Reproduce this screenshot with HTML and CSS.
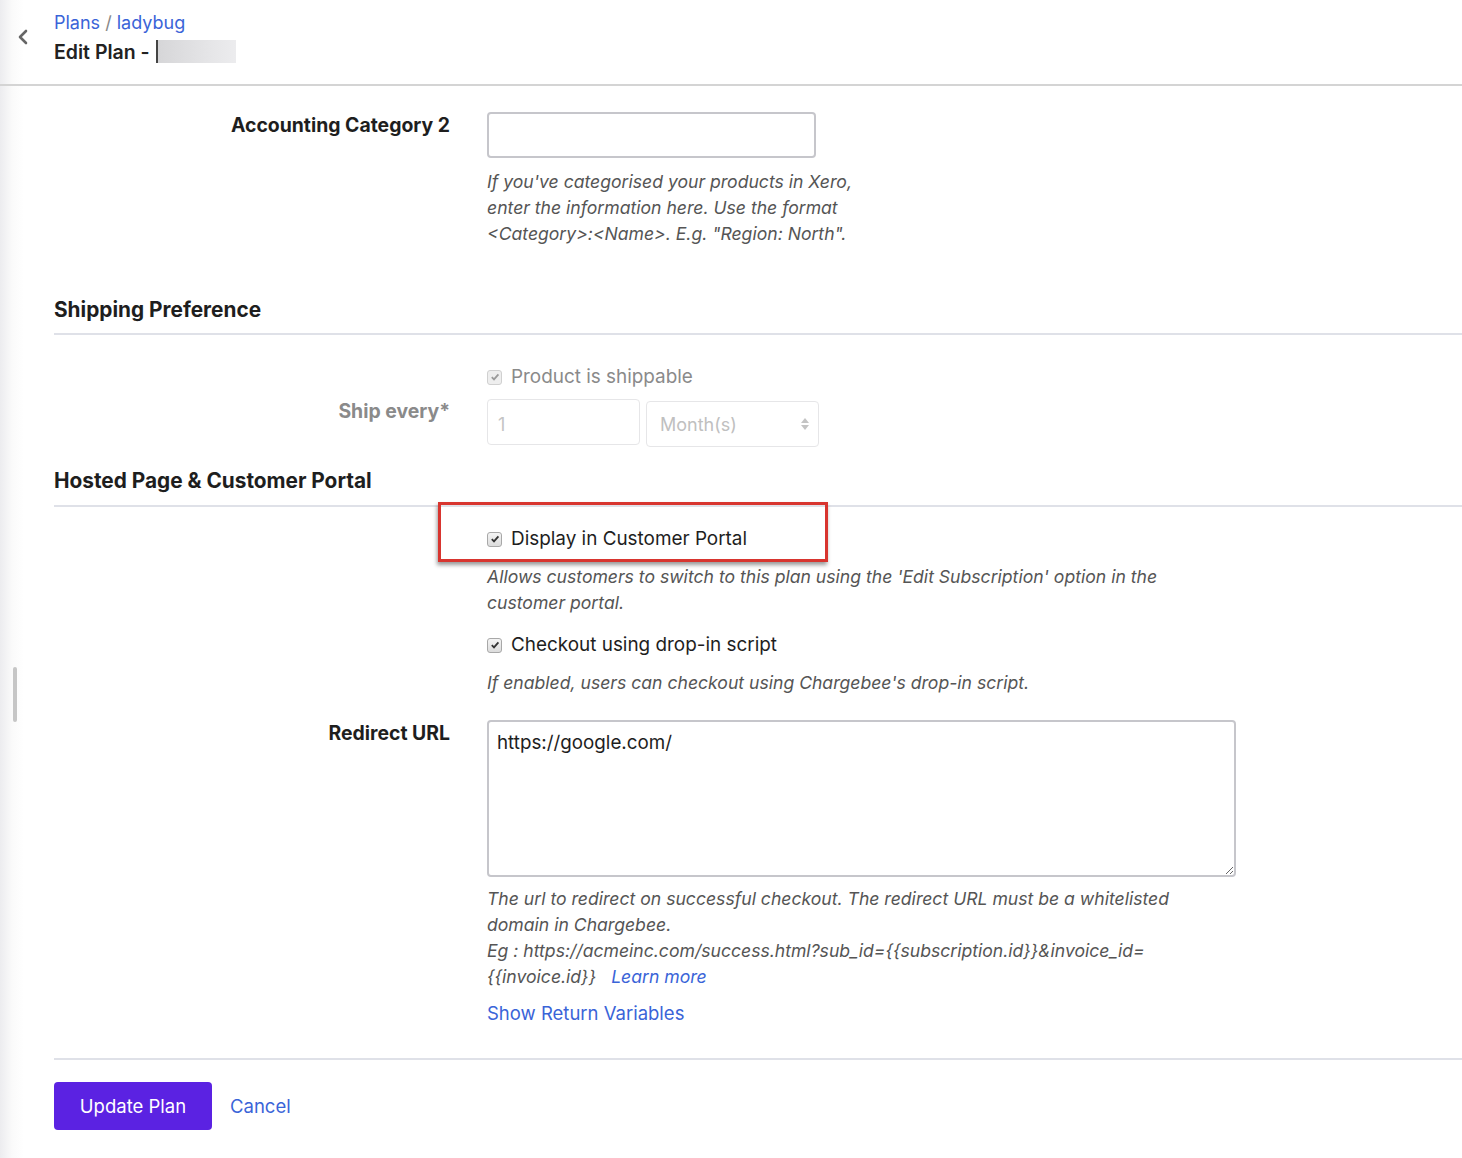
FILE: index.html
```html
<!DOCTYPE html>
<html>
<head>
  <title>Edit Plan</title>
  <meta name="viewport" content="width=device-width, initial-scale=1.0">
  <link rel="stylesheet" href="styles.css">
</head>
<body>
  <div class="scroll-handle"></div>
  <div id="header">
    <a class="back" href="#">
      <svg width="12" height="16" viewBox="0 0 12 16"><path d="M9 2 L3 8 L9 14" fill="none" stroke="#666" stroke-width="2.6" stroke-linecap="round" stroke-linejoin="round"/></svg>
    </a>
    <div class="titles">
      <div class="crumbs"><a href="#">Plans</a> <span class="sep">/</span> <a href="#">ladybug</a></div>
      <div class="page-title">Edit Plan - <span class="redacted"></span></div>
    </div>
  </div>

  <div class="content">
    <div class="form-row first">
      <label class="row-label">Accounting Category 2</label>
      <div class="field">
        <input type="text" class="text-input narrow">
        <p class="help narrow-help">If you've categorised your products in Xero, enter the information here. Use the format &lt;Category&gt;:&lt;Name&gt;. E.g. "Region: North".</p>
      </div>
    </div>

    <h3 class="section-title">Shipping Preference</h3>

    <div class="form-row check-only">
      <div class="row-label"></div>
      <div class="field">
        <label class="check disabled"><span class="box"><svg width="10" height="10" viewBox="0 0 10 10"><path d="M1.8 5.2 L4 7.4 L8.4 2.4" fill="none" stroke="#9a9a9a" stroke-width="1.8"/></svg></span>Product is shippable</label>
      </div>
    </div>
    <div class="form-row ship">
      <label class="row-label muted">Ship every*</label>
      <div class="field inline">
        <input type="text" class="text-input small" value="1" disabled>
        <div class="select-box">Month(s)
          <svg width="10" height="16" viewBox="0 0 10 16"><path d="M5 2 L9 7 H1 Z M5 14 L9 9 H1 Z" fill="#c4c4c4"/></svg>
        </div>
      </div>
    </div>

    <h3 class="section-title second">Hosted Page &amp; Customer Portal</h3>

    <div class="form-row portal">
      <div class="row-label"></div>
      <div class="field">
        <div class="highlight"></div>
        <label class="check"><span class="box"><svg width="10" height="10" viewBox="0 0 10 10"><path d="M1.8 5.2 L4 7.4 L8.4 2.4" fill="none" stroke="#333" stroke-width="1.8"/></svg></span>Display in Customer Portal</label>
        <p class="help">Allows customers to switch to this plan using the 'Edit Subscription' option in the customer portal.</p>
        <label class="check spaced"><span class="box"><svg width="10" height="10" viewBox="0 0 10 10"><path d="M1.8 5.2 L4 7.4 L8.4 2.4" fill="none" stroke="#333" stroke-width="1.8"/></svg></span>Checkout using drop-in script</label>
        <p class="help">If enabled, users can checkout using Chargebee's drop-in script.</p>
      </div>
    </div>

    <div class="form-row redirect">
      <label class="row-label">Redirect URL</label>
      <div class="field">
        <textarea class="url-input">https://google.com/</textarea>
        <p class="help">The url to redirect on successful checkout. The redirect URL must be a whitelisted domain in Chargebee.<br>Eg : https://acmeinc.com/success.html?sub_id={{subscription.id}}&amp;invoice_id= {{invoice.id}}<a class="learn" href="#">Learn more</a></p>
        <a class="show-vars" href="#">Show Return Variables</a>
      </div>
    </div>

    <div class="actions">
      <button type="button" class="primary">Update Plan</button>
      <a href="#" class="cancel">Cancel</a>
    </div>
  </div>
</body>
</html>
```

FILE: styles.css
```css
html, body {
  margin: 0;
  padding: 0;
  font-family: Inter, "Noto Sans", sans-serif;
  color: #222;
}
body {
  background: linear-gradient(90deg, #ececef 0, #fafafa 12px, #fff 24px);
  min-height: 1158px;
}
a {
  color: #3a64d8;
  text-decoration: none;
}
.scroll-handle {
  position: fixed;
  left: 13px;
  top: 667px;
  width: 4px;
  height: 55px;
  background: #c6c6c6;
  border-radius: 2px;
}
#header {
  height: 84px;
  border-bottom: 2px solid #d4d4d4;
  display: flex;
  align-items: center;
}
.back {
  width: 54px;
  display: flex;
  padding-left: 17px;
  box-sizing: border-box;
  margin-top: -10px;
}
.titles {
  display: flex;
  flex-direction: column;
  margin-top: -8px;
}
.crumbs {
  font-size: 18px;
  line-height: 24px;
}
.crumbs .sep {
  color: #888;
}
.page-title {
  font-size: 19.5px;
  font-weight: 600;
  line-height: 28px;
  margin-top: 3px;
  display: flex;
  align-items: center;
}
.redacted {
  display: inline-block;
  width: 78px;
  height: 23px;
  margin-left: 6px;
  border-left: 2px solid #444;
  background: linear-gradient(90deg, #d6d6d8, #e4e4e6 60%, #ececee);
  filter: blur(0.6px);
}
.content {
  padding-left: 54px;
}
.form-row {
  display: grid;
  grid-template-columns: 396px 1fr;
  column-gap: 37px;
}
.row-label {
  text-align: right;
  font-size: 19.4px;
  font-weight: 700;
  line-height: 24px;
  color: #1e1e1e;
}
.row-label.muted {
  color: #8a8a8a;
}
.first {
  margin-top: 26px;
}
.first .row-label,
.redirect .row-label {
  padding-top: 1px;
}
.text-input {
  font-family: Inter, "Noto Sans", sans-serif;
  font-size: 18px;
  height: 46px;
  padding: 0 10px;
  border: 2px solid #c6c6cb;
  border-radius: 4px;
  box-sizing: border-box;
  outline: none;
  display: block;
}
.text-input.narrow {
  width: 329px;
}
.text-input.small {
  width: 153px;
  border: 1.5px solid #e6e6e8;
  color: #c4c4c4;
  background: #fff;
  padding-top: 4px;
}
.help {
  font-style: italic;
  font-size: 17.6px;
  line-height: 26px;
  color: #555;
  margin: 11px 0 0;
  max-width: 700px;
}
.help.narrow-help {
  max-width: 370px;
}
.help .learn {
  margin-left: 15px;
}
.section-title {
  font-size: 20.8px;
  font-weight: 700;
  line-height: 26px;
  margin: 50px 0 0;
  padding-bottom: 10px;
  border-bottom: 2px solid #dfe1e8;
  color: #1e1e1e;
}
.section-title.second {
  margin-top: 21px;
  padding-bottom: 11px;
}
.check-only {
  margin-top: 30px;
}
.check {
  display: flex;
  align-items: center;
  font-size: 18.9px;
  line-height: 24px;
  color: #1e1e1e;
}
.check.disabled {
  color: #8a8a8a;
}
.check .box {
  width: 13px;
  height: 13px;
  border: 1px solid #a8a8a8;
  border-radius: 3px;
  background: linear-gradient(#f4f4f4, #dcdcdc);
  display: flex;
  align-items: center;
  justify-content: center;
  margin-right: 9px;
}
.check.disabled .box {
  border-color: #d0d0d0;
  background: #eeeeee;
}
.check.spaced {
  margin-top: 17px;
}
.ship {
  margin-top: 10px;
}
.ship .row-label {
  padding-top: 0;
}
.inline {
  display: flex;
  gap: 6px;
  align-items: flex-start;
}
.select-box {
  width: 173px;
  height: 46px;
  margin-top: 2px;
  border: 1.5px solid #e6e6e8;
  border-radius: 4px;
  box-sizing: border-box;
  display: flex;
  align-items: center;
  justify-content: space-between;
  padding: 0 8px 0 13px;
  font-size: 18px;
  color: #c0c0c0;
}
.portal {
  margin-top: 20px;
}
.portal .field {
  position: relative;
}
.portal .help {
  margin-top: 13px;
}
.highlight {
  position: absolute;
  left: -49px;
  top: -25px;
  width: 390px;
  height: 60px;
  box-sizing: border-box;
  border: 3px solid #d8352f;
  box-shadow: -1px 3px 4px rgba(0, 0, 0, 0.4);
}
.redirect {
  margin-top: 24px;
}
.url-input {
  display: block;
  width: 749px;
  height: 157px;
  box-sizing: border-box;
  border: 2px solid #c6c6cb;
  border-radius: 4px;
  padding: 9px 8px;
  font-family: Inter, "Noto Sans", sans-serif;
  font-size: 18.8px;
  line-height: 24px;
  color: #1e1e1e;
  resize: vertical;
  outline: none;
}
.redirect .help {
  margin-top: 9px;
}
.show-vars {
  display: block;
  margin-top: 11px;
  font-size: 18.5px;
  line-height: 24px;
}
.actions {
  margin-top: 33px;
  border-top: 2px solid #dfe1e8;
  padding-top: 22px;
  display: flex;
  align-items: center;
  gap: 18px;
}
.primary {
  font-family: Inter, "Noto Sans", sans-serif;
  font-size: 18.5px;
  color: #fff;
  background: #5b22e2;
  border: none;
  border-radius: 4px;
  width: 158px;
  height: 48px;
  cursor: pointer;
}
.cancel {
  font-size: 18.5px;
}
```
